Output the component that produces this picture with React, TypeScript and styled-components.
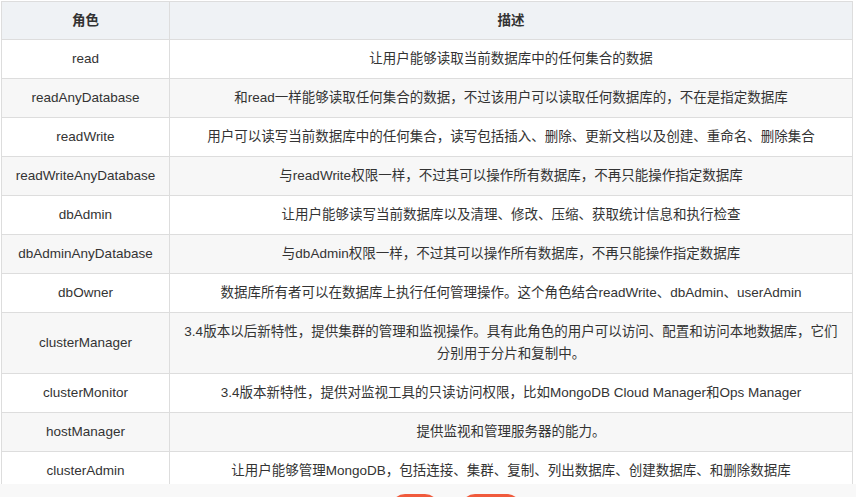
import React from "react";
import styled, { createGlobalStyle } from "styled-components";

const Global = createGlobalStyle`
  body { margin: 0; background: #fff; font-family: "Microsoft YaHei", "Liberation Sans", Arial, "Noto Sans CJK SC", sans-serif; }
`;

const Page = styled.div`
  width: 856px;
  height: 497px;
  overflow: hidden;
  background: #f8f8f8;
`;

const Clip = styled.div`
  height: 484px;
  overflow: hidden;
  background: #fff;
  padding: 1px 0 0 1px;
  box-sizing: border-box;
`;

const Table = styled.table`
  width: 852px;
  border-collapse: collapse;
  font-size: 13.5px;
  color: #333;
  line-height: 22px;
`;

const Th = styled.th`
  background: #eff2f5;
  border: 1px solid #dddddd;
  font-weight: bold;
  height: 38px;
  padding: 0 10px;
  box-sizing: border-box;
`;

const Tr = styled.tr<{ $alt: boolean }>`
  background: ${(p) => (p.$alt ? "#f7f7f7" : "#fff")};
`;

const Td = styled.td`
  border: 1px solid #dddddd;
  padding: 8px 10px;
  text-align: center;
`;

const Footer = styled.div`
  display: flex;
  justify-content: center;
  gap: 22px;
  padding: 10px 0 0 56px;
`;

const RedBtn = styled.div<{ $w: number }>`
  width: ${(p) => p.$w}px;
  height: 30px;
  border-radius: 14px;
  background: #f05a3c;
`;

const rows: [string, string][] = [
  ["read", "让用户能够读取当前数据库中的任何集合的数据"],
  ["readAnyDatabase", "和read一样能够读取任何集合的数据，不过该用户可以读取任何数据库的，不在是指定数据库"],
  ["readWrite", "用户可以读写当前数据库中的任何集合，读写包括插入、删除、更新文档以及创建、重命名、删除集合"],
  ["readWriteAnyDatabase", "与readWrite权限一样，不过其可以操作所有数据库，不再只能操作指定数据库"],
  ["dbAdmin", "让用户能够读写当前数据库以及清理、修改、压缩、获取统计信息和执行检查"],
  ["dbAdminAnyDatabase", "与dbAdmin权限一样，不过其可以操作所有数据库，不再只能操作指定数据库"],
  ["dbOwner", "数据库所有者可以在数据库上执行任何管理操作。这个角色结合readWrite、dbAdmin、userAdmin"],
  ["clusterManager", "3.4版本以后新特性，提供集群的管理和监视操作。具有此角色的用户可以访问、配置和访问本地数据库，它们分别用于分片和复制中。"],
  ["clusterMonitor", "3.4版本新特性，提供对监视工具的只读访问权限，比如MongoDB Cloud Manager和Ops Manager"],
  ["hostManager", "提供监视和管理服务器的能力。"],
  ["clusterAdmin", "让用户能够管理MongoDB，包括连接、集群、复制、列出数据库、创建数据库、和删除数据库"],
];

export default function App() {
  return (
    <Page>
      <Global />
      <Clip>
        <Table>
          <colgroup>
            <col style={{ width: 168 }} />
            <col />
          </colgroup>
          <thead>
            <tr>
              <Th>角色</Th>
              <Th>描述</Th>
            </tr>
          </thead>
          <tbody>
            {rows.map(([r, d], i) => (
              <Tr key={r} $alt={i % 2 === 1}>
                <Td>{r}</Td>
                <Td>{d}</Td>
              </Tr>
            ))}
          </tbody>
        </Table>
      </Clip>
      <Footer>
        <RedBtn $w={48} />
        <RedBtn $w={60} />
      </Footer>
    </Page>
  );
}
